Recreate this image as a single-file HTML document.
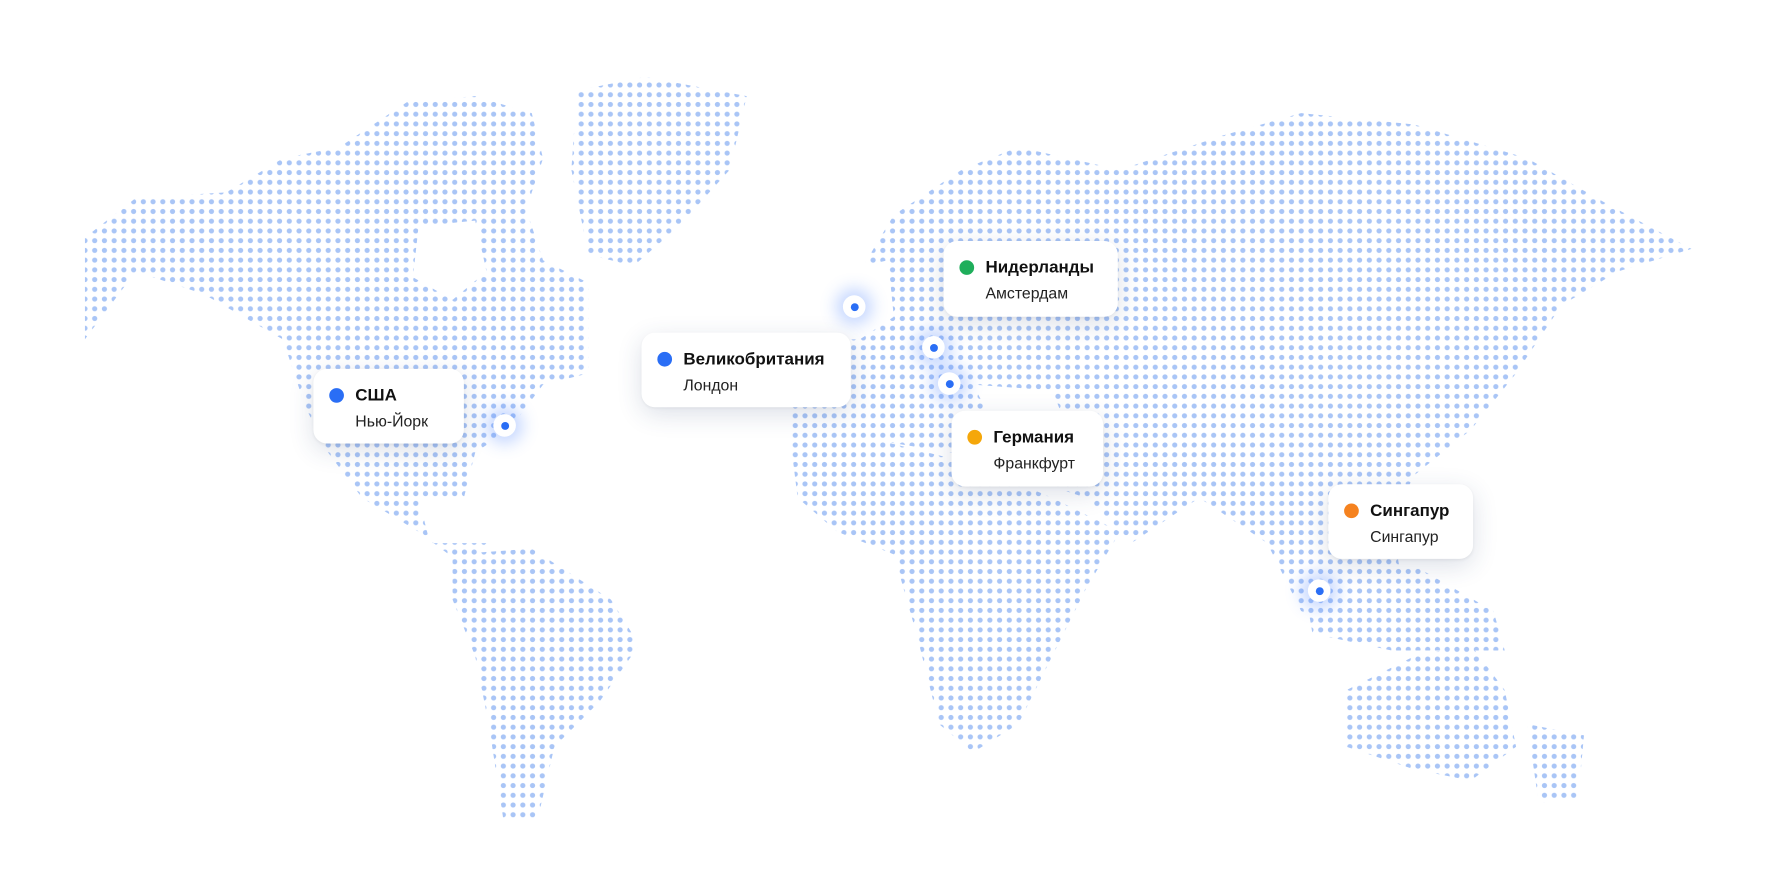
<!DOCTYPE html>
<html><head><meta charset="utf-8"><style>
html,body{margin:0;padding:0;background:#fff;width:1774px;height:887px;overflow:hidden;font-family:"Liberation Sans",sans-serif}
#w{position:absolute;left:0;top:0;width:1568px;height:784px;transform:scale(1.1314);transform-origin:0 0}
.card{position:absolute;background:#fff;border-radius:12px;box-shadow:0 6px 22px rgba(40,60,110,.16),0 1px 3px rgba(0,0,0,.06)}
.card .t{position:absolute;left:37px;top:15px;font-weight:bold;font-size:15px;color:#111}
.card .s{position:absolute;left:37px;top:38px;font-size:14px;color:#222}
.card .d{position:absolute;left:14px;top:17px;width:13px;height:13px;border-radius:50%}
.pin{position:absolute;width:20px;height:20px;margin:-10px 0 0 -10px;border-radius:50%;background:#fff;box-shadow:0 0 14px 6px rgba(60,120,255,.3)}
.pin:after{content:"";position:absolute;left:6.5px;top:6.5px;width:7px;height:7px;border-radius:50%;background:#2a6ef5}
</style></head><body><div id="w">
<svg width="1568" height="784" style="position:absolute;left:0;top:0">
<defs>
<pattern id="p" x="2" y="2" width="8.6" height="8.6" patternUnits="userSpaceOnUse"><circle cx="4.3" cy="4.3" r="2.3" fill="#a9c5f6"/></pattern>
<clipPath id="c">
<polygon points="75,210 120,175 200,170 250,140 300,130 330,110 360,90 420,85 470,100 480,140 465,185 480,230 520,250 520,330 480,340 450,380 420,400 410,440 370,440 380,480 430,480 410,500 370,470 320,440 290,400 270,360 250,300 180,260 120,240 75,300"/>
<polygon points="510,80 570,68 660,85 645,150 600,200 560,235 520,225 505,150"/>
<polygon points="400,490 470,485 540,530 565,570 530,620 490,660 475,725 445,725 432,640 420,580 400,530"/>
<polygon points="700,300 760,240 790,190 850,150 900,130 990,150 1080,120 1150,100 1250,110 1350,140 1420,180 1495,220 1430,240 1380,270 1340,330 1300,380 1250,420 1230,460 1240,520 1200,560 1150,540 1120,480 1060,440 1000,480 960,440 900,420 840,400 780,390 700,400"/>
<polygon points="700,400 780,390 860,410 930,440 990,470 960,520 920,600 900,640 860,665 830,640 810,560 790,490 740,470 705,440"/>
<polygon points="1150,500 1250,500 1320,540 1330,575 1230,575 1160,560"/>
<polygon points="1190,610 1250,580 1300,570 1330,610 1340,660 1300,690 1250,680 1190,660"/>
<polygon points="735,255 765,255 765,290 735,290"/>
<polygon points="1350,640 1400,650 1395,705 1360,710"/>
</clipPath>
</defs>
<rect width="1568" height="784" fill="url(#p)" clip-path="url(#c)"/>
<g fill="#fff">
<polygon points="370,200 420,195 430,240 400,265 365,245"/>
<polygon points="700,300 740,240 785,230 790,280 760,300"/>
<polygon points="860,340 930,345 940,370 880,378"/>
<polygon points="1040,455 1080,450 1070,500 1050,490"/>
</g>
</svg>
<div class="pin" style="left:446px;top:376px"></div>
<div class="pin" style="left:755px;top:271px"></div>
<div class="pin" style="left:825px;top:307px"></div>
<div class="pin" style="left:839px;top:339px"></div>
<div class="pin" style="left:1166px;top:522px"></div>
<div class="card" style="left:277px;top:326px;width:133px;height:66px"><div class="d" style="background:#2a6ef5"></div><div class="t">США</div><div class="s">Нью-Йорк</div></div>
<div class="card" style="left:567px;top:294px;width:185px;height:66px"><div class="d" style="background:#2a6ef5"></div><div class="t">Великобритания</div><div class="s">Лондон</div></div>
<div class="card" style="left:834px;top:213px;width:154px;height:67px"><div class="d" style="background:#1fae5b"></div><div class="t">Нидерланды</div><div class="s">Амстердам</div></div>
<div class="card" style="left:841px;top:363px;width:134px;height:67px"><div class="d" style="background:#f5a70a"></div><div class="t">Германия</div><div class="s">Франкфурт</div></div>
<div class="card" style="left:1174px;top:428px;width:128px;height:66px"><div class="d" style="background:#f5821f"></div><div class="t">Сингапур</div><div class="s">Сингапур</div></div>
</div></body></html>
